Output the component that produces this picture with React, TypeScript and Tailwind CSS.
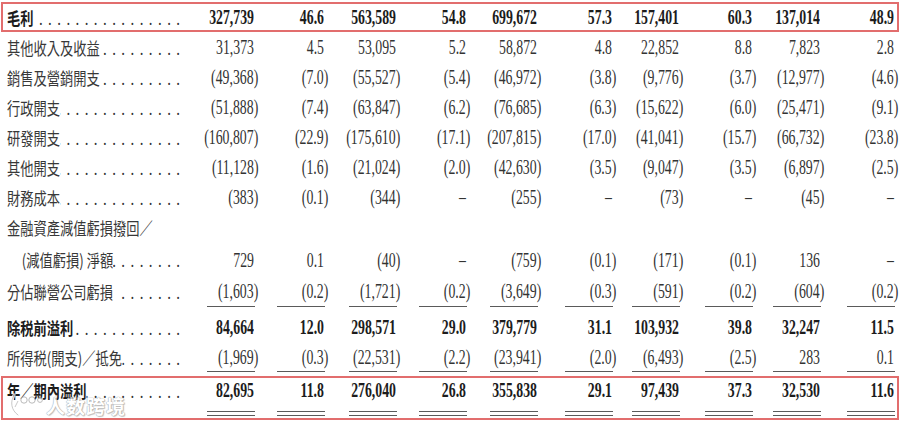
import React from "react";

type RowDef = {
  label: string;
  vals: string[];
  bold?: boolean;
  dots?: boolean;
  indent?: boolean;
  line?: "single" | "double";
  h: string;
};

const GRID =
  "grid grid-cols-[177px_75px_70px_72px_70px_71px_75px_67px_73px_68px_74px]";

const rows: RowDef[] = [
  { label: "其他收入及收益", vals: ["31,373", "4.5", "53,095", "5.2", "58,872", "4.8", "22,852", "8.8", "7,823", "2.8"], h: "h-[30px]" },
  { label: "銷售及營銷開支", vals: ["(49,368)", "(7.0)", "(55,527)", "(5.4)", "(46,972)", "(3.8)", "(9,776)", "(3.7)", "(12,977)", "(4.6)"], h: "h-[30px]" },
  { label: "行政開支", vals: ["(51,888)", "(7.4)", "(63,847)", "(6.2)", "(76,685)", "(6.3)", "(15,622)", "(6.0)", "(25,471)", "(9.1)"], h: "h-[30px]" },
  { label: "研發開支", vals: ["(160,807)", "(22.9)", "(175,610)", "(17.1)", "(207,815)", "(17.0)", "(41,041)", "(15.7)", "(66,732)", "(23.8)"], h: "h-[30px]" },
  { label: "其他開支", vals: ["(11,128)", "(1.6)", "(21,024)", "(2.0)", "(42,630)", "(3.5)", "(9,047)", "(3.5)", "(6,897)", "(2.5)"], h: "h-[30px]" },
  { label: "財務成本", vals: ["(383)", "(0.1)", "(344)", "–", "(255)", "–", "(73)", "–", "(45)", "–"], h: "h-[30px]" },
  { label: "金融資產減值虧損撥回／", vals: [], dots: false, h: "h-[31px]" },
  { label: "(減值虧損) 淨額", indent: true, vals: ["729", "0.1", "(40)", "–", "(759)", "(0.1)", "(171)", "(0.1)", "136", "–"], h: "h-[33px]" },
  { label: "分佔聯營公司虧損 ", vals: ["(1,603)", "(0.2)", "(1,721)", "(0.2)", "(3,649)", "(0.3)", "(591)", "(0.2)", "(604)", "(0.2)"], line: "single", h: "h-[31px]" },
  { label: "除税前溢利", bold: true, vals: ["84,664", "12.0", "298,571", "29.0", "379,779", "31.1", "103,932", "39.8", "32,247", "11.5"], h: "mt-[5px] h-[30px]" },
  { label: "所得税(開支)／抵免", vals: ["(1,969)", "(0.3)", "(22,531)", "(2.2)", "(23,941)", "(2.0)", "(6,493)", "(2.5)", "283", "0.1"], line: "single", h: "h-[30px]" },
];

const topRow: RowDef = {
  label: "毛利 ",
  bold: true,
  vals: ["327,739", "46.6", "563,589", "54.8", "699,672", "57.3", "157,401", "60.3", "137,014", "48.9"],
  h: "h-[26px]",
};

const lastRow: RowDef = {
  label: "年／期內溢利",
  bold: true,
  vals: ["82,695", "11.8", "276,040", "26.8", "355,838", "29.1", "97,439", "37.3", "32,530", "11.6"],
  line: "double",
  h: "h-[40px]",
};

function Num({ v, bold }: { v: string; bold?: boolean }) {
  const neg = v.startsWith("(");
  const body = neg ? v.slice(0, -1) : v;
  return (
    <span
      className={
        "inline-block shrink-0 origin-right scale-x-[0.69] whitespace-nowrap font-['Liberation_Serif',serif] text-[20px] leading-none " +
        (bold ? "font-bold text-[#1c1c1c]" : "text-[#333333]")
      }
    >
      {body}
      {neg && <span className="mr-[-6.66px]">)</span>}
    </span>
  );
}

function Label({ r }: { r: RowDef }) {
  const dots = r.dots !== false;
  return (
    <div className="flex h-full items-center">
      <div
        className={
          "flex w-[227px] shrink-0 origin-left scale-x-[0.78] items-end " +
          (r.indent ? "pl-[24px]" : "pl-[5px]")
        }
      >
        <span
          className={
            "shrink-0 whitespace-pre font-['Noto_Sans_CJK_TC',sans-serif] text-[17px] leading-[21px] " +
            (r.bold ? "font-bold text-[#1c1c1c]" : "text-[#383838]")
          }
        >
          {r.label}
        </span>
        {dots && (
          <span className="flex min-w-0 flex-1 justify-end overflow-hidden">
            <span className="mr-[-7px] shrink-0 whitespace-nowrap font-['Liberation_Serif',serif] text-[19px] leading-[19px] tracking-[7px] text-[#333333]">
              {".".repeat(40)}
            </span>
          </span>
        )}
      </div>
    </div>
  );
}

function Row({ r }: { r: RowDef }) {
  return (
    <div className={GRID + " " + r.h}>
      <Label r={r} />
      {r.vals.map((v, i) =>
        r.line === "single" ? (
          <div key={i} className="flex h-full justify-end">
            <div className="flex h-full w-[48px] items-center justify-end border-b border-[#5a5a5a] pr-[1px]">
              <Num v={v} bold={r.bold} />
            </div>
          </div>
        ) : (
          <div key={i} className="flex h-full items-center justify-end pr-[1px]">
            <Num v={v} bold={r.bold} />
          </div>
        )
      )}
    </div>
  );
}

function LastRow({ r }: { r: RowDef }) {
  return (
    <div className={GRID + " " + r.h}>
      <div className="h-[24px]">
        <Label r={r} />
      </div>
      {r.vals.map((v, i) => (
        <div key={i} className="flex flex-col items-end">
          <div className="flex h-[24px] items-center justify-end pr-[1px]">
            <Num v={v} bold={r.bold} />
          </div>
          <div className="mt-[9px] h-[5px] w-[48px] border-y border-[#5a5a5a]" />
        </div>
      ))}
    </div>
  );
}

function Watermark() {
  return (
    <div className="pointer-events-none absolute left-[6px] top-[15px] flex items-center gap-[3px] opacity-75">
      <svg width="34" height="24" viewBox="0 0 34 24" fill="none">
        <path d="M5 2 C1 9 2 17 9 22" stroke="#ffffff" strokeWidth="3.2" strokeLinecap="round" />
        <path d="M5 2 C1 9 2 17 9 22" stroke="#a5a5a5" strokeWidth="0.8" strokeLinecap="round" />
        <path d="M9 8 L6 14" stroke="#a5a5a5" strokeWidth="0.8" />
        <circle cx="15" cy="7" r="3.2" stroke="#a5a5a5" strokeWidth="1" fill="#ffffff" />
        <circle cx="23" cy="7" r="3.2" stroke="#a5a5a5" strokeWidth="1" fill="#ffffff" />
        <circle cx="31" cy="7" r="2.4" stroke="#a5a5a5" strokeWidth="1" fill="#ffffff" />
      </svg>
      <span className="font-['Noto_Sans_CJK_SC',sans-serif] text-[19px] font-bold leading-none tracking-[1px] text-white [text-shadow:0_0_1px_#888,0_0_1px_#888,1px_1px_1px_rgba(0,0,0,0.3)]">
        人数跨境
      </span>
    </div>
  );
}

export default function App() {
  return (
    <div className="h-[421px] w-[900px] overflow-hidden bg-white px-[3px] pt-[4px]">
      <div className="outline-2 outline-[#e26d6d]">
        <Row r={topRow} />
      </div>
      <div className="mt-[2px]">
        {rows.map((r, i) => (
          <Row key={i} r={r} />
        ))}
      </div>
      <div className="relative mt-[6px] outline-2 outline-[#e26d6d]">
        <LastRow r={lastRow} />
        <Watermark />
      </div>
    </div>
  );
}
